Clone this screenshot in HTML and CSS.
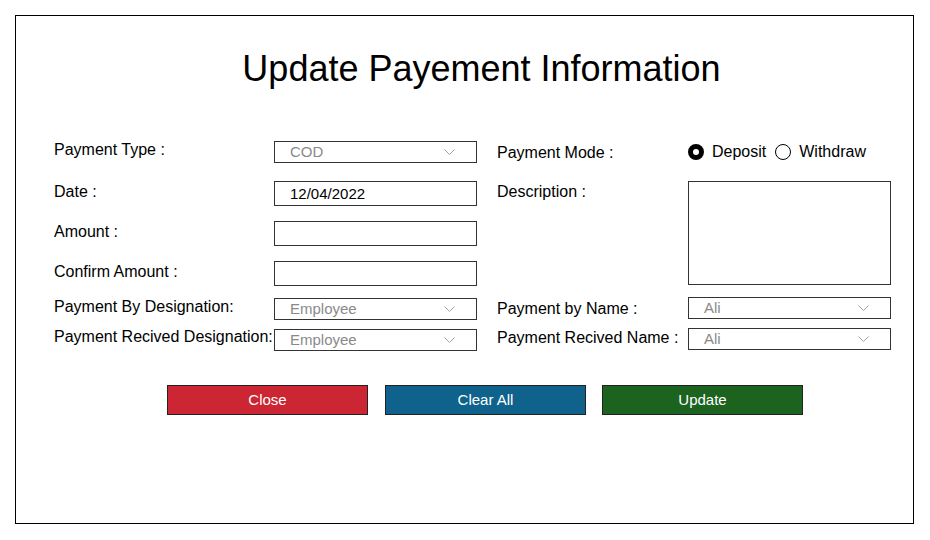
FILE: index.html
```html
<!DOCTYPE html>
<html>
<head>
<meta charset="utf-8">
<link rel="stylesheet" href="styles.css">
</head>
<body>
<div class="frame">
  <h1 class="title">Update Payement Information</h1>
  <div class="form">
    <div class="lbl l r1">Payment Type :</div>
    <div class="select f1 r1"><span>COD</span><svg class="chev" width="11" height="6" viewBox="0 0 11 6"><polyline points="0.5,0.5 5.5,5.5 10.5,0.5" fill="none" stroke="#a0a0a0" stroke-width="1"/></svg></div>
    <div class="lbl rl r1 mode">Payment Mode :</div>
    <div class="radios f2 r1">
      <span class="radio on"></span><span class="rtxt">Deposit</span>
      <span class="radio"></span><span class="rtxt">Withdraw</span>
    </div>

    <div class="lbl l r2">Date :</div>
    <div class="input f1 r2 dark">12/04/2022</div>
    <div class="lbl rl r2 desc">Description :</div>
    <div class="textarea f2 r2"></div>

    <div class="lbl l r3">Amount :</div>
    <div class="input f1 r3"></div>

    <div class="lbl l r4">Confirm Amount :</div>
    <div class="input f1 r4"></div>

    <div class="lbl l r5">Payment By Designation:</div>
    <div class="select f1 r5 low"><span>Employee</span><svg class="chev" width="11" height="6" viewBox="0 0 11 6"><polyline points="0.5,0.5 5.5,5.5 10.5,0.5" fill="none" stroke="#a0a0a0" stroke-width="1"/></svg></div>
    <div class="lbl rl r5 name">Payment by Name :</div>
    <div class="select f2 r5"><span>Ali</span><svg class="chev" width="11" height="6" viewBox="0 0 11 6"><polyline points="0.5,0.5 5.5,5.5 10.5,0.5" fill="none" stroke="#a0a0a0" stroke-width="1"/></svg></div>

    <div class="lbl l r6">Payment Recived Designation:</div>
    <div class="select f1 r6 low"><span>Employee</span><svg class="chev" width="11" height="6" viewBox="0 0 11 6"><polyline points="0.5,0.5 5.5,5.5 10.5,0.5" fill="none" stroke="#a0a0a0" stroke-width="1"/></svg></div>
    <div class="lbl rl r6 name2">Payment Recived Name :</div>
    <div class="select f2 r6"><span>Ali</span><svg class="chev" width="11" height="6" viewBox="0 0 11 6"><polyline points="0.5,0.5 5.5,5.5 10.5,0.5" fill="none" stroke="#a0a0a0" stroke-width="1"/></svg></div>
  </div>
  <div class="buttons">
    <button class="btn close">Close</button>
    <button class="btn clear">Clear All</button>
    <button class="btn update">Update</button>
  </div>
</div>
</body>
</html>
```
FILE: styles.css
```css
* { box-sizing: border-box; }
html, body { margin: 0; padding: 0; background: #fff; }
body {
  font-family: "Liberation Sans", Arial, sans-serif;
  color: #000;
  padding: 15px;
}
.frame {
  width: 899px;
  height: 509px;
  border: 1px solid #000;
}
.title {
  margin: 32px 0 0 0;
  font-size: 36px;
  font-weight: normal;
  line-height: 41px;
  text-align: center;
  padding-left: 34px;
}
.form {
  margin-top: 52px;
  margin-left: 38px;
  display: grid;
  grid-template-columns: 220px 203px 20px 191px 203px;
  grid-template-rows: 40px 40px 40px 36px 31px 22px;
}
.lbl {
  font-size: 16px;
  line-height: 18px;
  white-space: nowrap;
}
.l { grid-column: 1; margin-top: 2px; }
.rl { grid-column: 4; }
.mode { margin-top: 3px; }
.desc { margin-top: 2px; }
.name { margin-top: 3px; }
.name2 { margin-top: 1px; }
.f1 { grid-column: 2; }
.f2 { grid-column: 5; }
.r1 { grid-row: 1; }
.r2 { grid-row: 2; }
.r3 { grid-row: 3; }
.r4 { grid-row: 4; }
.r5 { grid-row: 5; }
.r6 { grid-row: 6; }
.l.r1 { margin-top: 0; }
.l.r5 { margin-top: 1px; }
.l.r6 { margin-top: 0; }

.input, .select {
  border: 1px solid #333;
  font-size: 15px;
  padding-left: 15px;
  display: flex;
  align-items: center;
}
.input { height: 25px; align-self: start; }
.dark { color: #000; }
.select {
  height: 22px;
  align-self: start;
  color: #8a8a8a;
  justify-content: space-between;
  padding-right: 21px;
  padding-bottom: 1px;
}
.select.low { margin-top: 1px; }
.chev { display: block; }
.textarea {
  grid-row: 2 / span 3;
  height: 104px;
  border: 1px solid #333;
  align-self: start;
}
.radios {
  display: flex;
  align-items: center;
  font-size: 16px;
  height: 22px;
}
.radio {
  width: 16px;
  height: 16px;
  border-radius: 50%;
  border: 1px solid #000;
  display: inline-block;
  margin-right: 8px;
}
.radio.on {
  border: 5px solid #000;
}
.rtxt { margin-right: 9px; }

.buttons {
  display: flex;
  margin-top: 35px;
  padding-left: 151px;
}
.btn {
  width: 201px;
  height: 30px;
  border: 1px solid #222;
  color: #fff;
  font-family: "Liberation Sans", Arial, sans-serif;
  font-size: 15px;
  padding: 0 0 2px 0;
  margin: 0;
}
.clear { margin-left: 17px; }
.update { margin-left: 16px; }
.close { background: #cc2533; }
.clear { background: #0f628c; }
.update { background: #1b631f; }
```
